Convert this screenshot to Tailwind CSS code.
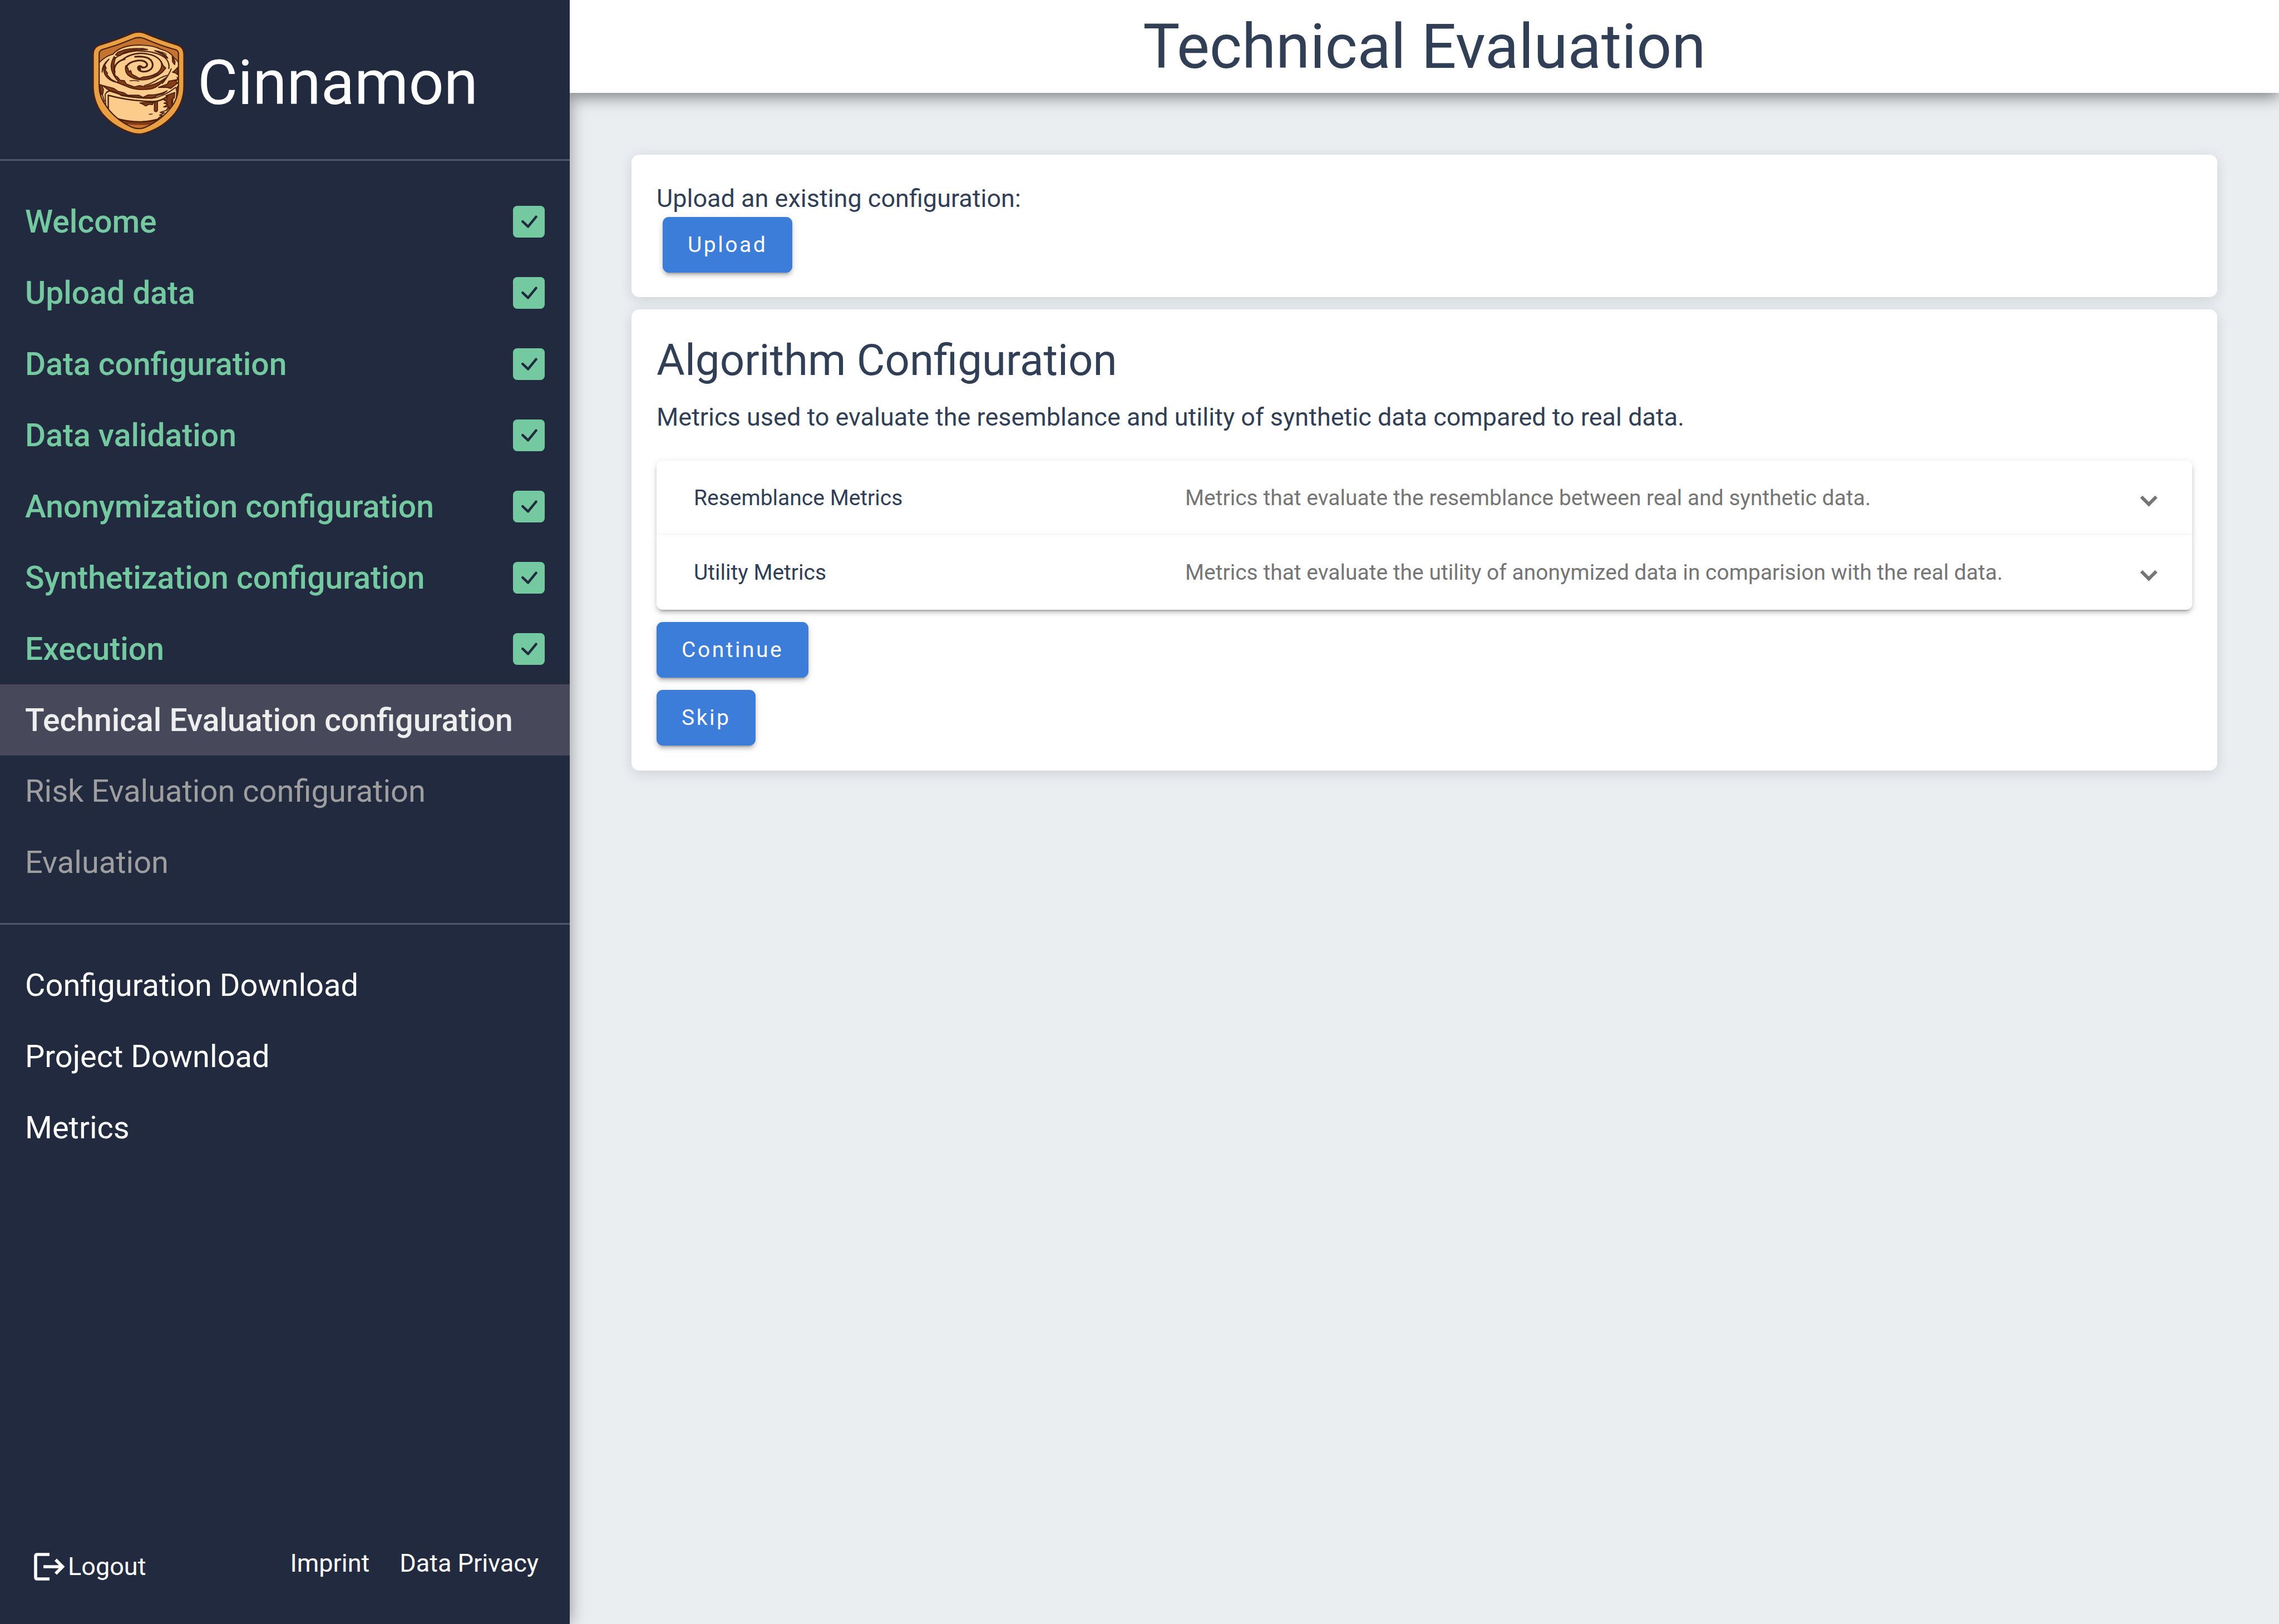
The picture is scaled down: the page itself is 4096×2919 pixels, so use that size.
<!DOCTYPE html>
<html lang="en">
<head>
    <meta charset="UTF-8">
    <meta name="viewport" content="width=device-width, initial-scale=1.0">
    <script src="https://cdn.jsdelivr.net/npm/@tailwindcss/browser@4"></script>
    <title>Technical Evaluation - Cinnamon</title>
</head>
<body class="bg-[#eaeef1] min-h-screen flex font-['Roboto',sans-serif] text-[45px] leading-[67px] text-[#313f56]">
    <!-- Check mark used by the finished steps -->
    <svg class="hidden">
        <symbol id="check" viewBox="0 0 61 61">
            <rect width="61" height="61" rx="8" fill="#75c9a0"/>
            <path d="M18.500 30L29 40L44.500 21" fill="none" stroke="#222a3f" stroke-width="4.800" stroke-linecap="round" stroke-linejoin="round"/>
        </symbol>
    </svg>

    <!-- Sidebar -->
    <aside class="w-1/4 shrink-0 min-h-screen flex flex-col bg-[#222a3f] text-white shadow-[0_0_28px_rgba(0,0,0,0.4)]">
        <div class="h-[289px] pt-3 shrink-0 flex items-center justify-center gap-[22px] border-b-3 border-[#4f586b]">
            <svg class="w-[168px] h-[188px]" viewBox="54 58 540 608" aria-hidden="true">
                <defs>
                    <clipPath id="shield">
                        <path d="M325 98Q345 98 365 107Q450 144 538 169Q556 174 556 192V380Q554 455 515 502Q460 575 362 621Q325 635 288 621Q190 575 140 502Q95 445 95 380V192Q96 176 112 169Q200 144 288 107Q305 98 325 98Z"/>
                    </clipPath>
                </defs>
                <!-- Frame -->
                <path d="M325 66Q343 66 362 74Q450 112 554 143Q588 156 588 196V380Q588 470 535 540Q470 620 366 653Q325 666 284 653Q180 620 112 540Q60 470 60 380V196Q60 156 94 143Q200 112 286 74Q307 66 325 66Z" fill="#e9a045" stroke="#4a2010" stroke-width="8"/>
                <g clip-path="url(#shield)">
                    <path d="M90 90H560V640H90Z" fill="#c6732f"/>
                    <!-- Bun -->
                    <path d="M80 262Q120 210 175 195Q215 150 300 143Q400 138 452 166Q508 180 530 216Q560 240 566 262V520L440 582Q325 610 205 574L80 480Z" fill="#fbcc8b" stroke="#4a2010" stroke-width="6"/>
                    <path d="M190 566Q320 606 470 572L400 612Q325 622 240 596Z" fill="#843c15" stroke="#4a2010" stroke-width="6"/>
                    <path d="M250 600Q320 612 400 604L360 624H290Z" fill="#c6732f"/>
                    <!-- Filling between the turns -->
                    <g fill="#843c15" stroke="#4a2010" stroke-width="6" stroke-linejoin="round">
                        <path d="M190 200L204 184L236 172Q300 154 376 168L340 170Q280 170 240 186L214 204Z"/>
                        <path d="M418 174Q470 180 494 218L480 214L462 196Z"/>
                        <path d="M130 262L136 278L130 286L144 306L140 314L166 342L200 360Q150 350 130 316Q116 290 130 262Z"/>
                        <path d="M152 224Q112 256 112 300Q122 256 152 224Z"/>
                        <path d="M182 210Q158 250 168 288Q178 322 206 352L200 360L230 372L270 388Q330 408 400 396Q446 382 486 330Q440 366 400 374L360 384L330 378L300 386L252 368L242 350L216 346L202 328L188 320L184 300Q174 260 190 216Z"/>
                        <path d="M250 262Q242 292 262 316Q300 348 360 344Q420 336 462 300L482 276L468 262L456 240Q466 280 430 306Q390 328 350 328L330 336L304 322L286 312L278 290L268 298L262 276Z"/>
                        <path d="M440 388L490 370L500 352L552 342L540 352L552 362L510 394L490 388Z"/>
                        <path d="M520 206L536 238L534 256L522 240Z"/>
                        <path d="M552 272L532 292L522 300L538 304L552 314Z"/>
                        <path d="M112 376L180 394L206 412L240 420L262 434L326 434L350 446L380 432Q440 434 490 408L466 426L430 436L412 448Q340 456 226 436L200 420L150 404Z"/>
                        <path d="M97 372L108 374L120 400L116 426L108 430L102 400Z"/>
                        <path d="M332 478L412 474L404 488L384 486L366 496L350 486Z"/>
                        <path d="M416 470H434V522Q426 536 416 524Z"/>
                        <path d="M484 436L534 418L532 450L524 452L520 500L508 516L498 510L486 520L500 500L470 502L494 488L472 480L494 474L470 460L490 456Z"/>
                        <path d="M542 396L556 376V430L544 452L546 410Z"/>
                    </g>
                    <!-- Dark swirl lines -->
                    <g fill="none" stroke="#4a2010" stroke-linecap="round" stroke-linejoin="round">
                        <path d="M304 210Q370 204 396 230Q416 256 398 280Q376 300 346 296Q322 292 320 274Q326 258 342 268" stroke-width="10"/>
                        <path d="M344 272Q374 276 374 252Q362 230 326 232Q268 238 252 270" stroke-width="10"/>
                        <path d="M328 268L332 284" stroke-width="14"/>
                        <path d="M228 230Q270 192 340 190Q440 196 460 250" stroke-width="8"/>
                        <path d="M186 300Q176 264 208 240Q226 226 244 224" stroke-width="9"/>
                        <path d="M184 222Q224 186 310 176Q420 174 476 214Q506 240 500 278" stroke-width="7"/>
                        <path d="M274 350Q300 346 326 352" stroke-width="5"/>
                        <path d="M490 318Q450 330 420 352Q390 370 358 378" stroke-width="6"/>
                        <path d="M514 280Q500 320 462 366" stroke-width="6"/>
                        <path d="M328 164Q350 156 366 168M446 182Q470 182 486 196" stroke-width="4"/>
                        <path d="M400 322Q420 324 438 308" stroke-width="4"/>
                        <path d="M138 416Q150 404 176 416Q270 450 400 452Q470 444 540 388" stroke-width="6"/>
                        <path d="M148 520V434Q270 468 412 470Q450 470 494 440" stroke-width="8"/>
                        <path d="M134 512L130 430Q136 414 150 412M104 440L122 492M114 430L126 470" stroke-width="6"/>
                        <path d="M386 545L404 543" stroke-width="5"/>
                        <path d="M490 520L450 534L474 536L446 550L464 552L440 566M518 460V484M548 330L556 350" stroke-width="6"/>
                        <path d="M140 520L205 572Q325 606 446 570" stroke-width="7"/>
                    </g>
                </g>
                <path d="M325 98Q345 98 365 107Q450 144 538 169Q556 174 556 192V380Q554 455 515 502Q460 575 362 621Q325 635 288 621Q190 575 140 502Q95 445 95 380V192Q96 176 112 169Q200 144 288 107Q305 98 325 98Z" fill="none" stroke="#4a2010" stroke-width="7"/>
            </svg>
            <span class="text-[111px] leading-[130px]">Cinnamon</span>
        </div>
        <nav class="py-[45px] border-b-3 border-[#4f586b] text-[57px] font-medium text-[#75c9a0]">
            <a href="#" class="h-32 px-[45px] flex items-center justify-between">Welcome <svg class="size-[57px]"><use href="#check"/></svg></a>
            <a href="#" class="h-32 px-[45px] flex items-center justify-between">Upload data <svg class="size-[57px]"><use href="#check"/></svg></a>
            <a href="#" class="h-32 px-[45px] flex items-center justify-between">Data configuration <svg class="size-[57px]"><use href="#check"/></svg></a>
            <a href="#" class="h-32 px-[45px] flex items-center justify-between">Data validation <svg class="size-[57px]"><use href="#check"/></svg></a>
            <a href="#" class="h-32 px-[45px] flex items-center justify-between">Anonymization configuration <svg class="size-[57px]"><use href="#check"/></svg></a>
            <a href="#" class="h-32 px-[45px] flex items-center justify-between">Synthetization configuration <svg class="size-[57px]"><use href="#check"/></svg></a>
            <a href="#" class="h-32 px-[45px] flex items-center justify-between">Execution <svg class="size-[57px]"><use href="#check"/></svg></a>
            <a href="#" class="h-32 px-[45px] flex items-center bg-[#47495b] text-[#eeeeee]">Technical Evaluation configuration</a>
            <a href="#" class="h-32 px-[45px] flex items-center text-[56px] font-normal text-[#9e9e9e]">Risk Evaluation configuration</a>
            <a href="#" class="h-32 px-[45px] flex items-center text-[56px] font-normal text-[#9e9e9e]">Evaluation</a>
        </nav>
        <nav class="py-[45px] text-[56px]">
            <a href="#" class="h-32 px-[45px] flex items-center">Configuration Download</a>
            <a href="#" class="h-32 px-[45px] flex items-center">Project Download</a>
            <a href="#" class="h-32 px-[45px] flex items-center">Metrics</a>
        </nav>
        <div class="mt-auto px-14 pb-[70px] flex justify-between">
            <button class="pt-1.5 flex items-center">
                <svg class="w-[66px] h-[56px]" viewBox="0 0 66 56" fill="none" stroke="currentColor" stroke-width="5.6" aria-hidden="true">
                    <path d="M33 6H11Q8 6 8 9V47Q8 50 11 50H33M22 28H57M44 15.5L56.5 28L44 40.5"/>
                </svg>
                Logout
            </button>
            <div class="flex gap-[54px]">
                <a href="#">Imprint</a>
                <a href="#">Data Privacy</a>
            </div>
        </div>
    </aside>

    <!-- Page content -->
    <div class="flex-1 min-w-0 flex flex-col">
        <header class="relative h-[167px] flex items-center justify-center bg-white shadow-[0_6px_28px_rgba(0,0,0,0.5)] [clip-path:inset(0_0_-60px_0)]">
            <h1 class="text-[111px] leading-[134px]">Technical Evaluation</h1>
        </header>

        <main class="p-[111px] flex flex-col gap-[22px]">
            <section class="p-[45px] pb-11 rounded-[14px] bg-white shadow-[0_5px_22px_rgba(49,51,74,0.15)]">
                <p>Upload an existing configuration:</p>
                <button class="ml-[11px] h-[100px] px-[45px] block rounded-[11px] bg-[#3c7dd9] text-white text-[39px] leading-[56px] tracking-[0.09em] shadow-[0_8px_3px_-6px_rgba(0,0,0,0.2),0_6px_6px_rgba(0,0,0,0.14),0_3px_14px_rgba(0,0,0,0.12)]">Upload</button>
            </section>

            <section class="p-[45px] rounded-[14px] bg-white shadow-[0_5px_22px_rgba(49,51,74,0.15)]">
                <h2 class="mb-[22px] text-[78px] leading-[93px]">Algorithm Configuration</h2>
                <p class="mb-[45px]">Metrics used to evaluate the resemblance and utility of synthetic data compared to real data.</p>

                <div class="mb-[22px] text-[39px] leading-[56px]">
                    <button class="w-full h-[134px] px-[67px] flex items-center text-left rounded-t-[11px] bg-white shadow-[0_8px_3px_-6px_rgba(0,0,0,0.2),0_6px_6px_rgba(0,0,0,0.14),0_3px_14px_rgba(0,0,0,0.12)]">
                        <span class="flex-1 mr-[45px]">Resemblance Metrics</span>
                        <span class="flex-2 mr-[45px] text-[#757575]">Metrics that evaluate the resemblance between real and synthetic data.</span>
                        <span class="size-[22px] rotate-45 border-r-6 border-b-6 border-[#757575]"></span>
                    </button>
                    <button class="w-full h-[134px] px-[67px] flex items-center text-left rounded-b-[11px] bg-white shadow-[0_8px_3px_-6px_rgba(0,0,0,0.2),0_6px_6px_rgba(0,0,0,0.14),0_3px_14px_rgba(0,0,0,0.12)]">
                        <span class="flex-1 mr-[45px]">Utility Metrics</span>
                        <span class="flex-2 mr-[45px] text-[#757575]">Metrics that evaluate the utility of anonymized data in comparision with the real data.</span>
                        <span class="size-[22px] rotate-45 border-r-6 border-b-6 border-[#757575]"></span>
                    </button>
                </div>

                <div class="flex flex-col items-start gap-[22px] text-[39px] leading-[56px] text-white">
                    <button class="h-[100px] px-[45px] rounded-[11px] bg-[#3c7dd9] tracking-[0.09em] shadow-[0_8px_3px_-6px_rgba(0,0,0,0.2),0_6px_6px_rgba(0,0,0,0.14),0_3px_14px_rgba(0,0,0,0.12)]">Continue</button>
                    <button class="h-[100px] px-[45px] rounded-[11px] bg-[#3c7dd9] tracking-[0.09em] shadow-[0_8px_3px_-6px_rgba(0,0,0,0.2),0_6px_6px_rgba(0,0,0,0.14),0_3px_14px_rgba(0,0,0,0.12)]">Skip</button>
                </div>
            </section>
        </main>
    </div>
</body>
</html>
